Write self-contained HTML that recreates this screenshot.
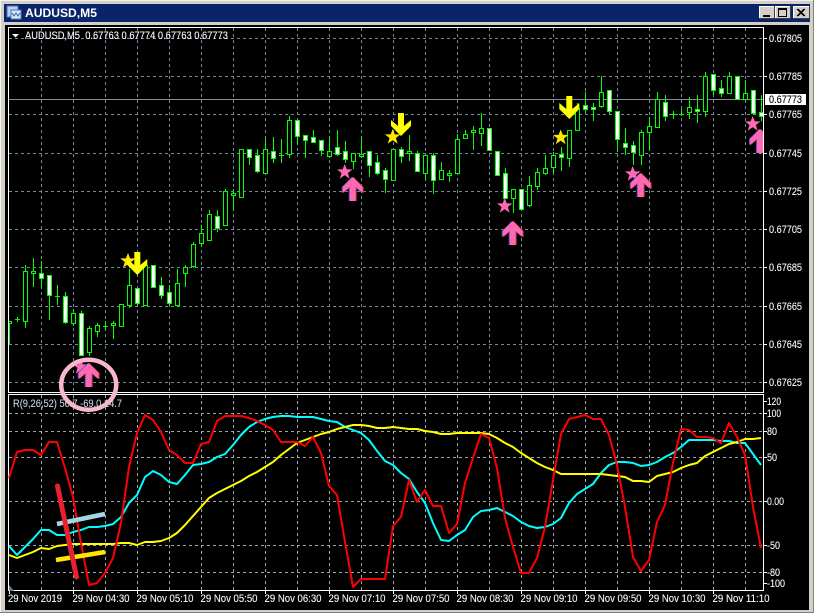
<!DOCTYPE html>
<html><head><meta charset="utf-8"><title>AUDUSD,M5</title>
<style>
html,body{margin:0;padding:0;background:#d4d0c8;width:814px;height:613px;overflow:hidden}
svg{display:block}
text{font-family:"Liberation Sans",sans-serif;font-size:11px;fill:#f4f8ff;stroke:#f4f8ff;stroke-width:.12}
</style></head><body>
<svg width="814" height="613" viewBox="0 0 814 613" xmlns="http://www.w3.org/2000/svg">
<defs>
<clipPath id="c"><rect x="9" y="28" width="754" height="364"/></clipPath>
<path id="up" d="M0 0L10 10V16L3 10V24H-3V10L-10 16V10Z"/>
<path id="dn" d="M0 0L10 -10V-16L3 -10V-23H-3V-10L-10 -16V-10Z"/>
<path id="st" d="M0-8L2.100-2.600H7.800L3.200 1 4.900 6.600 0 3.300-4.900 6.600-3.200 1-7.800-2.600H-2.100Z"/>
</defs>
<!-- window frame -->
<rect width="814" height="613" fill="#d4d0c8"/>
<path d="M0 .5H814M.5 0V613" stroke="#f4f2ee" fill="none"/>
<path d="M813.5 0V613M0 612.5H814" stroke="#808080" fill="none"/>
<rect x="4" y="4" width="806" height="18" fill="#0a246a"/>
<rect x="5" y="25" width="804" height="585" fill="#000"/>
<!-- title bar -->
<rect x="7" y="6" width="11" height="11" fill="#b8d0f0" stroke="#5070b0" stroke-width="1"/>
<rect x="11" y="10" width="10" height="9" fill="#dce8f8" stroke="#5070b0" stroke-width="1"/>
<path d="M12 13l2 3 2-3 2 3 2-3" stroke="#3060a0" fill="none"/>
<text x="25" y="17" style="font-size:12px;font-weight:bold;fill:#fff;stroke:none" textLength="72" lengthAdjust="spacingAndGlyphs">AUDUSD,M5</text>
<g shape-rendering="crispEdges">
<rect x="759" y="6" width="15" height="13" fill="#d4d0c8"/><path d="M759.5 19V6.500H774" stroke="#fff" fill="none"/><path d="M759 18.500H774.500V6" stroke="#404040" fill="none"/>
<rect x="763" y="15" width="7" height="2" fill="#000"/>
<rect x="775" y="6" width="15" height="13" fill="#d4d0c8"/><path d="M775.5 19V6.500H790" stroke="#fff" fill="none"/><path d="M775 18.500H790.500V6" stroke="#404040" fill="none"/>
<rect x="778.500" y="8.500" width="8" height="8" fill="none" stroke="#000"/><path d="M778 9.500H787" stroke="#000"/>
<rect x="793" y="6" width="16" height="13" fill="#d4d0c8"/><path d="M793.500 19V6.500H809" stroke="#fff" fill="none"/><path d="M793 18.500H809.500V6" stroke="#404040" fill="none"/>
</g>
<path d="M797 9l7 7M798 9l7 7M804 9l-7 7M805 9l-7 7" stroke="#000" stroke-width="1" fill="none"/>

<!-- grid -->
<g shape-rendering="crispEdges" fill="none" stroke="#778899" stroke-dasharray="3 3">
<path d="M9 38.500H763M9 76.500H763M9 114.500H763M9 153.500H763M9 191.500H763M9 229.500H763M9 267.500H763M9 306.500H763M9 344.500H763M9 382.500H763"/>
<path d="M41.500 28V392M73.500 28V392M105.500 28V392M137.500 28V392M169.500 28V392M201.500 28V392M233.500 28V392M265.500 28V392M297.500 28V392M329.500 28V392M361.500 28V392M393.500 28V392M425.500 28V392M457.500 28V392M489.500 28V392M521.500 28V392M553.500 28V392M585.500 28V392M617.500 28V392M649.500 28V392M681.500 28V392M713.500 28V392M745.500 28V392"/>
</g>
<g shape-rendering="crispEdges" fill="none" stroke="#a0a6ac" stroke-dasharray="3 3">
<path d="M9 413.500H763M9 431.500H763M9 457.500H763M9 501.500H763M9 545.500H763M9 572.500H763"/>
<path d="M41.500 395V590M73.500 395V590M105.500 395V590M137.500 395V590M169.500 395V590M201.500 395V590M233.500 395V590M265.500 395V590M297.500 395V590M329.500 395V590M361.500 395V590M393.500 395V590M425.500 395V590M457.500 395V590M489.500 395V590M521.500 395V590M553.500 395V590M585.500 395V590M617.500 395V590M649.500 395V590M681.500 395V590M713.500 395V590M745.500 395V590"/>
</g>
<!-- price line -->
<path d="M9 99.500H763" stroke="#858b93" shape-rendering="crispEdges"/>

<g clip-path="url(#c)" shape-rendering="crispEdges">
<!-- wicks -->
<path fill="none" stroke="#00ff00" d="M9.500 321V345M17.500 317V322M25.500 265V328M33.500 258V287M41.500 261V288M49.500 275V320M57.500 285V305M65.500 292V324M73.500 309V326M81.500 311V355M89.500 326V356M97.500 323V337M105.500 321V331M113.500 321V339M129.500 269V308M137.500 288V307M145.500 263V305M161.500 277V299M169.500 285V307M177.500 269V307M185.500 265V287M193.500 242V268M201.500 225V247M209.500 210V240M217.500 210V232M225.500 189V225M233.500 189V211M249.500 149V165M257.500 149V173M265.500 139V174M273.500 137V163M281.500 139V163M289.500 116V158M297.500 120V144M305.500 135V158M313.500 130V142M321.500 140V156M329.500 136V158M337.500 130V156M345.500 141V163M353.500 153V169M361.500 136V158M369.500 151V177M377.500 155V175M385.500 168V193M401.500 147V163M409.500 135V161M417.500 151V171M425.500 155V180M433.500 153V194M441.500 162V180M449.500 170V182M457.500 134V173M465.500 130V138M473.500 126V150M481.500 113V146M505.500 168V198M513.500 189V213M529.500 176V207M537.500 168V190M545.500 155V175M553.500 152V173M561.500 147V171M569.500 130V167M577.500 103V130M585.500 92V113M593.500 103V121M601.500 76V108M609.500 90V114M617.500 111V152M625.500 128V155M633.500 141V165M641.500 130V165M649.500 117V150M657.500 92V127M665.500 95V121M673.500 111V119M681.500 109V116M689.500 97V119M697.500 95V123M705.500 72V117M713.500 74V95M721.500 80V97M729.500 72V93M745.500 80V99M753.500 90V115M761.500 95V121"/>
<!-- dojis -->
<path fill="none" stroke="#00ff00" d="M15 319.500H20M55 296.500H60M103 326.500H108M279 155.500H284M671 114.500H676M679 114.500H684"/>
<!-- hollow -->
<path fill="#000" stroke="#00ff00" d="M7.500 321.500h4v2h-4zM23.500 271.500h4v50h-4zM31.500 271.500h4v2h-4zM71.500 313.500h4v10h-4zM87.500 328.500h4v24h-4zM95.500 325.500h4v6h-4zM111.500 323.500h4v2h-4zM119.500 304.500h4v22h-4zM127.500 285.500h4v20h-4zM143.500 265.500h4v40h-4zM175.500 283.500h4v22h-4zM183.500 267.500h4v6h-4zM191.500 244.500h4v22h-4zM199.500 233.500h4v10h-4zM207.500 214.500h4v26h-4zM223.500 191.500h4v34h-4zM231.500 193.500h4v2h-4zM239.500 149.500h4v48h-4zM263.500 149.500h4v24h-4zM287.500 120.500h4v34h-4zM327.500 151.500h4v5h-4zM351.500 153.500h4v8h-4zM359.500 154.500h4v2h-4zM391.500 149.500h4v31h-4zM407.500 151.500h4v2h-4zM423.500 155.500h4v18h-4zM439.500 170.500h4v9h-4zM447.500 173.500h4v2h-4zM455.500 139.500h4v34h-4zM463.500 134.500h4v4h-4zM471.500 130.500h4v2h-4zM479.500 128.500h4v5h-4zM511.500 189.500h4v9h-4zM527.500 185.500h4v20h-4zM535.500 172.500h4v14h-4zM543.500 168.500h4v5h-4zM551.500 155.500h4v12h-4zM567.500 130.500h4v28h-4zM575.500 108.500h4v22h-4zM599.500 92.500h4v14h-4zM639.500 132.500h4v23h-4zM647.500 126.500h4v6h-4zM655.500 99.500h4v28h-4zM687.500 107.500h4v5h-4zM703.500 76.500h4v35h-4zM727.500 76.500h4v17h-4zM743.500 93.500h4v6h-4z"/>
<!-- white -->
<path fill="#fff" stroke="#00ff00" d="M39.500 273.500h4v5h-4zM47.500 275.500h4v20h-4zM63.500 296.500h4v26h-4zM79.500 313.500h4v42h-4zM135.500 288.500h4v15h-4zM151.500 265.500h4v22h-4zM159.500 285.500h4v10h-4zM167.500 292.500h4v11h-4zM215.500 216.500h4v12h-4zM247.500 149.500h4v8h-4zM255.500 155.500h4v16h-4zM271.500 151.500h4v7h-4zM295.500 120.500h4v16h-4zM303.500 135.500h4v5h-4zM311.500 137.500h4v5h-4zM319.500 140.500h4v10h-4zM335.500 147.500h4v7h-4zM343.500 151.500h4v8h-4zM367.500 151.500h4v14h-4zM375.500 162.500h4v11h-4zM383.500 170.500h4v9h-4zM399.500 149.500h4v7h-4zM415.500 153.500h4v18h-4zM431.500 155.500h4v25h-4zM487.500 128.500h4v22h-4zM495.500 151.500h4v24h-4zM503.500 173.500h4v25h-4zM519.500 189.500h4v20h-4zM559.500 154.500h4v3h-4zM583.500 105.500h4v4h-4zM591.500 107.500h4v2h-4zM607.500 90.500h4v21h-4zM615.500 111.500h4v28h-4zM623.500 143.500h4v4h-4zM631.500 145.500h4v7h-4zM663.500 102.500h4v14h-4zM695.500 109.500h4v2h-4zM711.500 74.500h4v16h-4zM719.500 88.500h4v5h-4zM735.500 76.500h4v23h-4zM751.500 90.500h4v23h-4zM759.500 112.500h4v4h-4z"/>
</g>

<g clip-path="url(#c)">
<!-- stars -->
<g fill="#ffe800">
<use href="#st" transform="translate(128 261)"/>
<use href="#st" transform="translate(392.700 137)"/>
<use href="#st" transform="translate(560.700 137.500)"/>
</g>
<g fill="#ff69b4">
<use href="#st" transform="translate(344.700 172)"/>
<use href="#st" transform="translate(504.700 206)"/>
<use href="#st" transform="translate(632.700 174)"/>
<use href="#st" transform="translate(752.700 124)"/>
<use href="#st" transform="translate(80.700 367)"/>
</g>
<!-- yellow arrows -->
<g fill="#ffff00">
<use href="#dn" transform="translate(137.300 275)"/>
<use href="#dn" transform="translate(401 136)"/>
<use href="#dn" transform="translate(569.300 119)"/>
</g>
<!-- pink arrows -->
<g fill="#5a50c8"><use href="#up" transform="translate(87.700 363)"/><use href="#up" transform="translate(351.700 177)"/><use href="#up" transform="translate(511.700 221)"/><use href="#up" transform="translate(639.700 173)"/><use href="#up" transform="translate(759 129)"/></g>
<g fill="#b03030"><use href="#up" transform="translate(89.700 363)"/><use href="#up" transform="translate(353.700 177)"/><use href="#up" transform="translate(513.700 221)"/><use href="#up" transform="translate(641.700 173)"/><use href="#up" transform="translate(761 129)"/></g>
<g fill="#ff69b4"><use href="#up" transform="translate(88.700 363)"/><use href="#up" transform="translate(352.700 177)"/><use href="#up" transform="translate(512.700 221)"/><use href="#up" transform="translate(640.700 173)"/><use href="#up" transform="translate(760 129)"/></g>
</g>

<!-- borders -->
<g shape-rendering="crispEdges" fill="none" stroke="#fff">
<rect x="8.500" y="27.500" width="755" height="365"/>
<rect x="8.500" y="394.500" width="755" height="196"/>
</g>
<path d="M9 585L14 591H9Z" fill="#708090"/>
<!-- ticks -->
<path shape-rendering="crispEdges" stroke="#fff" fill="none" d="M764 38.500H767M764 76.500H767M764 114.500H767M764 153.500H767M764 191.500H767M764 229.500H767M764 267.500H767M764 306.500H767M764 344.500H767M764 382.500H767M764 401.500H767M764 413.500H767M764 431.500H767M764 457.500H767M764 501.500H767M764 545.500H767M764 572.500H767M764 583.500H767M9.500 591V594M73.500 591V594M137.500 591V594M201.500 591V594M265.500 591V594M329.500 591V594M393.500 591V594M457.500 591V594M521.500 591V594M585.500 591V594M649.500 591V594M713.500 591V594"/>

<!-- indicator lines -->
<polyline fill="none" stroke="#00ffff" stroke-width="2" stroke-linejoin="round" points="9,546 17,555 25,547 33,539 41,530 49,530 57,535 65,535 73,532 81,530 89,527 97,527 105,526 113,524 121,517 129,503 137,495 145,477 153,471 161,475 169,482 177,484 185,475 193,465 201,464 209,462 217,457 225,454 233,445 241,435 249,427 257,422 265,419 273,417 281,416 289,416 297,417 305,417 313,417 321,419 329,421 337,422 345,427 353,430 361,433 369,440 377,451 385,461 393,465 401,473 409,479 417,492 425,503 433,523 441,540 449,541 457,535 465,530 473,517 481,511 489,510 497,508 505,512 513,516 521,522 529,526 537,528 545,527 553,524 561,518 569,503 577,494 585,489 593,484 601,473 609,465 617,462 625,462 633,463 641,466 649,465 657,462 665,457 673,453 681,447 689,440 697,440 705,440 713,440 721,441 729,441 737,443 745,443 753,454 761,465"/>
<polyline fill="none" stroke="#ffff00" stroke-width="2" stroke-linejoin="round" points="9,555 17,558 25,555 33,552 41,548 49,549 57,546 65,545 73,544 81,544 89,544 97,544 105,544 113,544 121,543 129,543 137,545 145,542 153,542 161,541 169,538 177,533 185,525 193,516 201,507 209,498 217,493 225,489 233,485 241,481 249,476 257,472 265,467 273,462 281,455 289,449 297,443 305,440 313,437 321,434 329,432 337,429 345,427 353,425 361,425 369,426 377,428 385,428 393,427 401,428 409,429 417,429 425,431 433,432 441,434 449,434 457,433 465,433 473,433 481,433 489,434 497,438 505,443 513,447 521,453 529,458 537,463 545,467 553,470 561,474 569,474 577,474 585,474 593,474 601,474 609,475 617,476 625,477 633,481 641,481 649,482 657,476 665,474 673,472 681,468 689,465 697,463 705,456 713,452 721,448 729,444 737,442 745,439 753,439 761,438"/>
<polyline fill="none" stroke="#ff0000" stroke-width="2" stroke-linejoin="round" points="9,478 17,452 25,450 33,450 41,455 49,442 57,442 65,468 73,497 81,543 89,585 97,583 105,573 113,558 121,523 129,467 137,433 145,415 153,420 161,432 169,450 177,455 185,463 193,463 201,444 209,442 217,421 225,416 233,416 241,416 249,418 257,421 265,425 273,430 281,442 289,442 297,442 305,446 313,437 321,453 329,486 337,495 345,542 353,587 361,579 369,579 377,579 385,579 393,526 401,517 409,480 417,502 425,490 433,506 441,506 449,533 457,524 465,483 473,458 481,434 489,438 497,468 505,518 513,547 521,573 529,573 537,558 545,527 553,480 561,434 569,419 577,417 585,415 593,419 601,419 609,435 617,465 625,507 633,557 641,571 649,560 657,522 665,505 673,463 681,429 689,430 697,437 705,437 713,438 721,443 729,423 737,437 745,455 753,507 761,548"/>

<!-- hand annotations -->
<path d="M57 524L105 514" stroke="#a0d8e8" stroke-width="4.500" fill="none"/>
<path d="M56 560L105 552" stroke="#ffe600" stroke-width="4.500" fill="none"/>
<path d="M57.500 486L76.500 577" stroke="#e8212e" stroke-width="5" stroke-linecap="round" fill="none"/>

<!-- header -->
<path d="M12 34H19L15.500 37.500Z" fill="#fff"/>
<text x="25" y="39" textLength="203" lengthAdjust="spacingAndGlyphs" xml:space="preserve">AUDUSD,M5  0.67763 0.67774 0.67763 0.67773</text>
<text x="13" y="407" textLength="109" lengthAdjust="spacingAndGlyphs" style="fill:#c4d2e0;stroke:#c4d2e0">R(9,26,52) 56.7 -69.0 14.7</text>

<!-- pink circle -->
<ellipse cx="88.700" cy="384.700" rx="27.500" ry="25" fill="none" stroke="#f8b8cc" stroke-width="4.500"/>

<!-- price labels -->
<g>
<text x="769" y="42" textLength="33" lengthAdjust="spacingAndGlyphs">0.67805</text>
<text x="769" y="80" textLength="33" lengthAdjust="spacingAndGlyphs">0.67785</text>
<text x="769" y="118" textLength="33" lengthAdjust="spacingAndGlyphs">0.67765</text>
<text x="769" y="157" textLength="33" lengthAdjust="spacingAndGlyphs">0.67745</text>
<text x="769" y="195" textLength="33" lengthAdjust="spacingAndGlyphs">0.67725</text>
<text x="769" y="233" textLength="33" lengthAdjust="spacingAndGlyphs">0.67705</text>
<text x="769" y="271" textLength="33" lengthAdjust="spacingAndGlyphs">0.67685</text>
<text x="769" y="310" textLength="33" lengthAdjust="spacingAndGlyphs">0.67665</text>
<text x="769" y="348" textLength="33" lengthAdjust="spacingAndGlyphs">0.67645</text>
<text x="769" y="386" textLength="33" lengthAdjust="spacingAndGlyphs">0.67625</text>
</g>
<rect x="765" y="94" width="41" height="11" fill="#fff"/>
<text x="769" y="103" textLength="33" lengthAdjust="spacingAndGlyphs" style="fill:#000;stroke:#000">0.67773</text>
<!-- indicator labels -->
<text x="767" y="405" textLength="14" lengthAdjust="spacingAndGlyphs">120</text>
<text x="767" y="417" textLength="14" lengthAdjust="spacingAndGlyphs">100</text>
<text x="767" y="435" textLength="10" lengthAdjust="spacingAndGlyphs">80</text>
<text x="767" y="461" textLength="10" lengthAdjust="spacingAndGlyphs">50</text>
<text x="767" y="505" textLength="17" lengthAdjust="spacingAndGlyphs">0.00</text>
<text x="767" y="549" textLength="13" lengthAdjust="spacingAndGlyphs">-50</text>
<text x="767" y="576" textLength="13" lengthAdjust="spacingAndGlyphs">-80</text>
<text x="767" y="587" textLength="18" lengthAdjust="spacingAndGlyphs">-100</text>
<!-- time labels -->
<g>
<text x="8" y="602" textLength="54" lengthAdjust="spacingAndGlyphs">29 Nov 2019</text>
<text x="72.500" y="602" textLength="57" lengthAdjust="spacingAndGlyphs">29 Nov 04:30</text>
<text x="136.500" y="602" textLength="57" lengthAdjust="spacingAndGlyphs">29 Nov 05:10</text>
<text x="200.500" y="602" textLength="57" lengthAdjust="spacingAndGlyphs">29 Nov 05:50</text>
<text x="264.500" y="602" textLength="57" lengthAdjust="spacingAndGlyphs">29 Nov 06:30</text>
<text x="328.500" y="602" textLength="57" lengthAdjust="spacingAndGlyphs">29 Nov 07:10</text>
<text x="392.500" y="602" textLength="57" lengthAdjust="spacingAndGlyphs">29 Nov 07:50</text>
<text x="456.500" y="602" textLength="57" lengthAdjust="spacingAndGlyphs">29 Nov 08:30</text>
<text x="520.500" y="602" textLength="57" lengthAdjust="spacingAndGlyphs">29 Nov 09:10</text>
<text x="584.500" y="602" textLength="57" lengthAdjust="spacingAndGlyphs">29 Nov 09:50</text>
<text x="648.500" y="602" textLength="57" lengthAdjust="spacingAndGlyphs">29 Nov 10:30</text>
<text x="712.500" y="602" textLength="57" lengthAdjust="spacingAndGlyphs">29 Nov 11:10</text>
</g>
</svg>
</body></html>
